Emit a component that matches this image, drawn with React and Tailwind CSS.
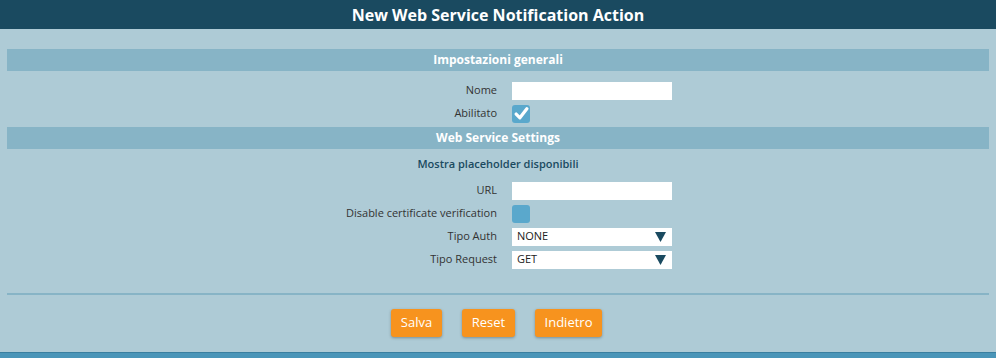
import React from "react";

const font = { fontFamily: '"Open Sans", "Liberation Sans", sans-serif' };

function Row({ label, children }) {
  return (
    <div className="grid grid-cols-[497px_1fr] gap-x-[15px] h-[23px] items-center">
      <div className="text-right text-[11px] text-[#333]">{label}</div>
      <div className="flex items-center">{children}</div>
    </div>
  );
}

function Check({ checked }) {
  return (
    <div className="w-[18px] h-[18px] rounded-[3px] bg-[#5aa8cc] flex items-center justify-center">
      {checked && (
        <svg width="15" height="15" viewBox="0 0 14 14">
          <path d="M2 7.5 L5.5 11 L12 2.5" fill="none" stroke="white" strokeWidth="3" strokeLinecap="round" strokeLinejoin="round" />
        </svg>
      )}
    </div>
  );
}

function Select({ value }) {
  return (
    <div className="w-[160px] h-[18px] bg-white flex items-center justify-between pl-[5px] pr-[6px] text-[11px] text-[#222]">
      <span>{value}</span>
      <svg width="11" height="10" viewBox="0 0 11 10">
        <path d="M0 0 H11 L5.5 10 Z" fill="#1a4a60" />
      </svg>
    </div>
  );
}

function Bar({ children }) {
  return (
    <div className="mx-[7px] h-[22px] bg-[#87b4c6] flex items-center justify-center text-white font-bold text-[12px]">
      {children}
    </div>
  );
}

function Btn({ children, w }) {
  return (
    <button className={`h-[28px] ${w} rounded-[3px] bg-[#f7931e] text-white text-[13px] shadow-[0_1px_3px_rgba(0,0,0,0.3)]`}>
      {children}
    </button>
  );
}

export default function App() {
  return (
    <div className="w-[996px] h-[358px] bg-[#aecbd6] overflow-hidden flex flex-col" style={font}>
      <div className="h-[29px] bg-[#1a4a60] flex items-center justify-center text-white font-bold text-[16px]">
        New Web Service Notification Action
      </div>
      <div className="mt-[20px]">
        <Bar>Impostazioni generali</Bar>
        <div className="pt-[8px] pb-[2px]">
          <Row label="Nome"><div className="w-[160px] h-[18px] bg-white" /></Row>
          <Row label="Abilitato"><Check checked /></Row>
        </div>
        <Bar>Web Service Settings</Bar>
        <div className="h-[30px] flex items-center justify-center text-[11px] font-semibold text-[#1a4a60]">
          Mostra placeholder disponibili
        </div>
        <Row label="URL"><div className="w-[160px] h-[18px] bg-white" /></Row>
        <Row label="Disable certificate verification"><Check /></Row>
        <Row label="Tipo Auth"><Select value="NONE" /></Row>
        <Row label="Tipo Request"><Select value="GET" /></Row>
        <div className="mx-[7px] mt-[22px] h-[2px] bg-[#87b4c6]" />
        <div className="mt-[14px] flex justify-center gap-[20px] pr-[3px]">
          <Btn w="w-[51px]">Salva</Btn>
          <Btn w="w-[53px]">Reset</Btn>
          <Btn w="w-[67px]">Indietro</Btn>
        </div>
      </div>
      <div className="mt-auto h-[6px] bg-[#4a95b8] border-t border-[#3a7fa0]" />
    </div>
  );
}
